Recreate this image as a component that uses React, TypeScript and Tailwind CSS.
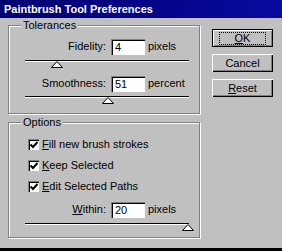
const face = { fontFamily: '"Liberation Sans", Arial, sans-serif' };

function Label({ text, u }: { text: string; u?: number }) {
  if (u === undefined || u < 0) return <>{text}</>;
  return (
    <>
      {text.slice(0, u)}
      <span className="underline">{text[u]}</span>
      {text.slice(u + 1)}
    </>
  );
}

function Field({ label, value, unit, u }: { label: string; value: string; unit: string; u?: number }) {
  return (
    <div className="flex items-center h-[15px]">
      <div className="w-[102px] text-right pr-[5px] text-[11px] text-black">
        <Label text={label} u={u} />
      </div>
      <div className="w-[34px] h-[16px] bg-white border-t border-l border-[#808080] shadow-[inset_1px_1px_0_#000] pl-[3px] text-[11px] leading-[14px] text-black">
        {value}
      </div>
      <div className="pl-[3px] text-[11px] text-black">{unit}</div>
    </div>
  );
}

function Slider({ pos }: { pos: number }) {
  return (
    <div className="relative h-[10px] ml-[16px] mr-[10px]">
      <div className="absolute left-0 right-0 top-[2px] h-[2px] bg-black border-b border-white" />
      <svg className="absolute top-[3px]" style={{ left: pos - 6 }} width="12" height="7" viewBox="0 0 12 7">
        <path d="M6 0.5 L11.5 6.5 L0.5 6.5 Z" fill="#fff" stroke="#000" />
      </svg>
    </div>
  );
}

function Check({ label, u }: { label: string; u: number }) {
  return (
    <div className="flex items-center gap-[3px] h-[14px]">
      <div className="w-[11px] h-[11px] bg-white border-t border-l border-[#808080] shadow-[inset_1px_1px_0_#000] flex items-center justify-center">
        <svg width="8" height="8" viewBox="0 0 8 8">
          <path d="M0.5 3.5 L3 6 L7.5 1" fill="none" stroke="#000" strokeWidth="2" />
        </svg>
      </div>
      <span className="text-[11px] text-black">
        <Label text={label} u={u} />
      </span>
    </div>
  );
}

function Group({ title, children, className }: { title: string; children: React.ReactNode; className: string }) {
  return (
    <div className={`relative border border-[#808080] shadow-[1px_1px_0_#fff,inset_1px_1px_0_#fff] ${className}`}>
      <div className="absolute -top-[8px] left-[12px] bg-[#c0c0c0] px-[2px] text-[11px] text-black leading-[14px]">{title}</div>
      {children}
    </div>
  );
}

function Btn({ label, u, focus }: { label: string; u: number; focus?: boolean }) {
  return (
    <div className={`w-[61px] h-[18px] bg-[#c0c0c0] flex items-center justify-center text-[11px] text-black ${focus ? "border border-black shadow-[inset_1px_1px_0_#fff,inset_-1px_-1px_0_#808080]" : "shadow-[inset_1px_1px_0_#fff,inset_-1px_-1px_0_#000,inset_-2px_-2px_0_#808080]"}`}>
      <span className={focus ? "outline outline-1 outline-dotted outline-black px-[15px] leading-[11px]" : ""}>
        <Label text={label} u={u} />
      </span>
    </div>
  );
}

export default function App() {
  return (
    <div style={face} className="w-[282px] h-[251px] bg-[#c0c0c0] border-b-[3px] border-black overflow-hidden flex flex-col">
      <div className="h-[18px] bg-gradient-to-r from-[#000070] to-[#0a0aa0] text-white font-bold text-[11px] leading-[18px] pl-[4px] shrink-0">
        Paintbrush Tool Preferences
      </div>
      <div className="flex pl-[8px] pt-[7px]">
        <div className="flex flex-col gap-[8px]">
          <Group title="Tolerances" className="w-[192px] h-[89px] pt-[13px]">
            <Field label="Fidelity:" value="4" unit="pixels" />
            <div className="mt-[4px]"><Slider pos={32} /></div>
            <div className="mt-[8px]"><Field label="Smoothness:" value="51" unit="percent" /></div>
            <div className="mt-[3px]"><Slider pos={83} /></div>
          </Group>
          <Group title="Options" className="w-[192px] h-[116px] pt-[14px] pl-[19px]">
            <div className="flex flex-col gap-[7px]">
              <Check label="Fill new brush strokes" u={0} />
              <Check label="Keep Selected" u={0} />
              <Check label="Edit Selected Paths" u={0} />
            </div>
            <div className="-ml-[19px] mt-[9px]"><Field label="Within:" value="20" unit="pixels" u={0} /></div>
            <div className="-ml-[19px] mt-[4px]"><Slider pos={163} /></div>
          </Group>
        </div>
        <div className="flex flex-col gap-[7px] pl-[12px] pt-[4px]">
          <Btn label="OK" u={0} focus />
          <Btn label="Cancel" u={-1} />
          <Btn label="Reset" u={0} />
        </div>
      </div>
    </div>
  );
}
